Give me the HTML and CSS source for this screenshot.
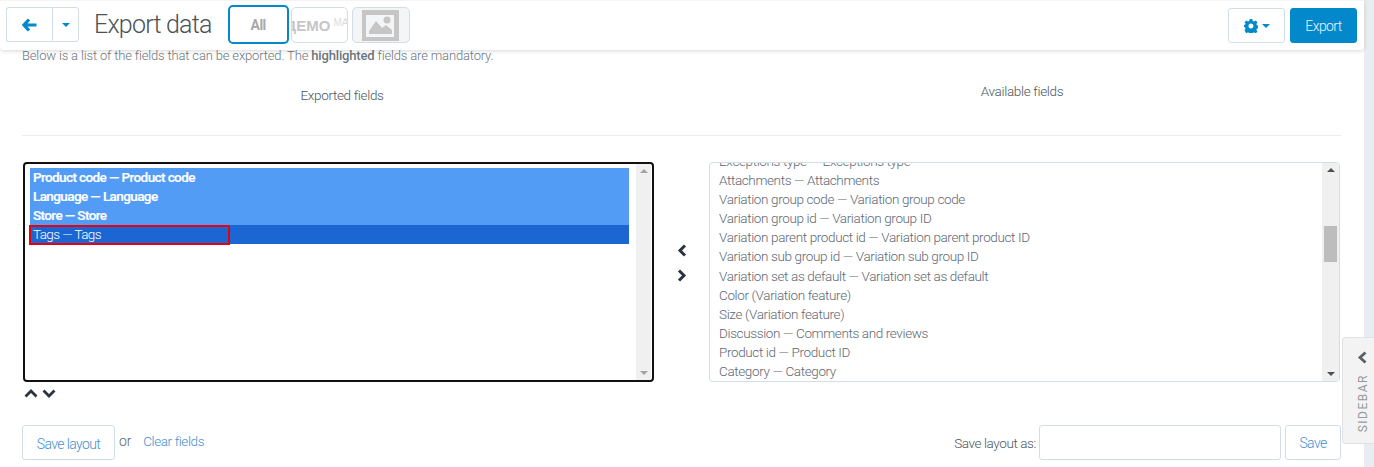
FILE: index.html
```html
<!DOCTYPE html>
<html lang="en">
<head>
<meta charset="utf-8">
<title>Export data</title>
<link rel="stylesheet" href="styles.css">
</head>
<body>
<div class="page">
  <main class="main">
    <header class="toolbar">
      <div class="btn-group">
        <button class="btn btn-back"><svg width="16" height="14" viewBox="0 0 16 14"><path d="M7 1.500 2 7l5 5.500M2.500 7H14.500" fill="none" stroke="#0388cc" stroke-width="3.200"/></svg></button>
        <button class="btn btn-caret"><span class="caret"></span></button>
      </div>
      <h1 class="title">Export data</h1>
      <div class="tabs">
        <div class="tab tab-all">All</div>
        <div class="tab tab-demo"><span class="demo-text">ДЕМО</span><span class="demo-sub">MA</span></div>
        <div class="tab tab-img">
          <svg width="37" height="31" viewBox="0 0 37 31"><path fill="#c6c6c6" d="M0 0h37v31H0z"/><path fill="#f4f5f6" d="M4 5h28v22H4z"/><path fill="#c6c6c6" d="M7 24v-3l7-10 6 7 4-3 6 5v4z"/><circle cx="25" cy="10" r="3.500" fill="#c6c6c6"/></svg>
        </div>
      </div>
      <div class="toolbar-right">
        <button class="btn btn-gear">
          <svg width="14" height="14" viewBox="0 0 14 14"><path fill="#0388cc" fill-rule="evenodd" d="M5.700 0h2.600l.4 1.900 1.300.6L11.700 1.400l1.800 1.800-1.100 1.700.6 1.300 1.900.4v2.600l-1.900.4-.6 1.300 1.100 1.700-1.800 1.800-1.700-1.100-1.300.6-.4 1.900H5.700l-.4-1.900-1.300-.6-1.700 1.100L.5 11.300l1.100-1.700-.6-1.300L0 7.900V6.100l1-.3.600-1.300L.5 3.200l1.800-1.800 1.700 1.100 1.300-.6zM7 4.500a2.500 2.500 0 1 0 0 5 2.500 2.500 0 0 0 0-5z"/></svg>
          <span class="caret caret-small"></span>
        </button>
        <button class="btn btn-primary">Export</button>
      </div>
    </header>

    <div class="content">
      <p class="intro">Below is a list of the fields that can be exported. The <b>highlighted</b> fields are mandatory.</p>

      <div class="labels">
        <div class="label label-left">Exported fields</div>
        <div class="label label-right">Available fields</div>
      </div>
      <hr class="rule">

      <div class="pickers">
        <div class="picker-col">
          <div class="listbox listbox-focus">
            <ul class="options options-left">
              <li class="opt sel-mandatory">Product code — Product code</li>
              <li class="opt sel-mandatory">Language — Language</li>
              <li class="opt sel-mandatory">Store — Store</li>
              <li class="opt sel-active">Tags — Tags<span class="marker"></span></li>
            </ul>
            <div class="scrollbar scrollbar-idle">
              <span class="arrow-up"></span>
              <span class="arrow-down"></span>
            </div>
          </div>
          <div class="order-btns">
            <svg width="14" height="9" viewBox="0 0 14 9"><path d="M1.500 7.500 7 2l5.500 5.500" fill="none" stroke="#2b3440" stroke-width="2.800"/></svg>
            <svg width="14" height="9" viewBox="0 0 14 9"><path d="M1.500 1.500 7 7l5.500-5.500" fill="none" stroke="#2b3440" stroke-width="2.800"/></svg>
          </div>
        </div>

        <div class="move-btns">
          <svg width="10" height="13" viewBox="0 0 10 13"><path d="M8 1.500 3 6.500l5 5" fill="none" stroke="#2b3440" stroke-width="3"/></svg>
          <svg width="10" height="13" viewBox="0 0 10 13"><path d="M2 1.500 7 6.500l-5 5" fill="none" stroke="#2b3440" stroke-width="3"/></svg>
        </div>

        <div class="listbox listbox-plain">
          <ul class="options options-right">
            <li class="opt">Exceptions type — Exceptions type</li>
            <li class="opt">Attachments — Attachments</li>
            <li class="opt">Variation group code — Variation group code</li>
            <li class="opt">Variation group id — Variation group ID</li>
            <li class="opt">Variation parent product id — Variation parent product ID</li>
            <li class="opt">Variation sub group id — Variation sub group ID</li>
            <li class="opt">Variation set as default — Variation set as default</li>
            <li class="opt">Color (Variation feature)</li>
            <li class="opt">Size (Variation feature)</li>
            <li class="opt">Discussion — Comments and reviews</li>
            <li class="opt">Product id — Product ID</li>
            <li class="opt">Category — Category</li>
          </ul>
          <div class="scrollbar scrollbar-active">
            <span class="arrow-up"></span>
            <span class="thumb"></span>
            <span class="arrow-down"></span>
          </div>
        </div>
      </div>

      <div class="footer-row">
        <div class="footer-left">
          <button class="btn btn-outline btn-save-layout">Save layout</button>
          <span class="or">or</span>
          <a class="link" href="#">Clear fields</a>
        </div>
        <div class="footer-right">
          <label class="save-as">Save layout as:</label>
          <div class="input"></div>
          <button class="btn btn-outline btn-save">Save</button>
        </div>
      </div>
    </div>
  </main>
  <aside class="gutter"></aside>
  <div class="sidebar-tab">
    <svg width="11" height="13" viewBox="0 0 11 13"><path d="M8.500 1.500 3 6.500l5.500 5" fill="none" stroke="#5a5f66" stroke-width="2.800"/></svg>
    <span class="sidebar-text">SIDEBAR</span>
  </div>
</div>
</body>
</html>
```
FILE: styles.css
```css
* { box-sizing: border-box; }
html, body { margin: 0; padding: 0; height: 467px; overflow: hidden; background: #fff; }
body { font-family: Roboto, "Liberation Sans", sans-serif; font-weight: 300; font-size: 14px; color: #55606b; }
.page { display: flex; width: 1374px; height: 467px; position: relative; overflow: hidden; }
.main { width: 1364px; flex: none; position: relative; }
.gutter { flex: 1; background: #e9edf1; }

.toolbar { position: relative; z-index: 2; height: 50px; padding: 6px 7px 0 6px; display: flex; align-items: flex-start; background: #fff; border-top: 1px solid #f4f4f4; border-radius: 0 0 4px 4px; box-shadow: 0 1px 4px rgba(0,0,0,.16); }
.btn { font-family: inherit; font-weight: 300; font-size: 14px; letter-spacing: -.6px; height: 35px; background: #fff; border: 1px solid #d3dde6; border-radius: 3px; padding: 0; display: inline-flex; align-items: center; justify-content: center; color: #3f8fd2; }
.btn-group { display: flex; }
.btn-back { width: 46px; border-radius: 3px 0 0 3px; border-right: 0; }
.btn-caret { width: 27px; border-radius: 0 3px 3px 0; }
.caret { width: 0; height: 0; border-left: 4px solid transparent; border-right: 4px solid transparent; border-top: 4px solid #0388cc; }
.title { margin: 1px 0 0 15px; font-size: 25px; line-height: 34px; font-weight: 300; color: #4a5259; letter-spacing: -.78px; }
.tabs { display: flex; align-items: flex-start; margin-left: 16px; gap: 2px; }
.tab { height: 36px; border-radius: 5px; display: flex; align-items: center; justify-content: center; overflow: hidden; border: 1px solid #d3dde6; }
.tab-all { width: 61px; height: 39px; margin-top: -2px; border: 2px solid #0388cc; font-weight: 700; font-size: 14px; letter-spacing: -.6px; color: #a8a8a8; }
.tab-demo { width: 57px; justify-content: flex-start; font-family: "Liberation Sans", sans-serif; white-space: nowrap; }
.demo-text { font-size: 15px; font-weight: 700; color: #c6c6c6; margin-left: -6px; }
.demo-sub { font-size: 10px; font-weight: 400; color: #dcdcdc; margin: -5px 0 0 3px; }
.tab-img { width: 58px; margin-left: 2px; background: #f4f5f6; }
.toolbar-right { margin-left: auto; display: flex; gap: 5px; padding-top: 1px; }
.btn-gear { width: 57px; gap: 4px; }
.caret-small { border-top-color: #0388cc; }
.btn-primary { width: 67px; background: #0388cc; border-color: #0388cc; color: #e9f6fd; }

.content { padding: 0 23px 0 22px; position: relative; }
.intro { margin: -1px 0 0; height: 21px; line-height: 13px; font-size: 13px; color: #6d7680; letter-spacing: -.16px; }
.intro b { font-weight: 500; }
.labels { display: flex; height: 65px; }
.label { width: 50%; flex: none; font-size: 13.500px; letter-spacing: -.33px; color: #4c555d; text-align: center; }
.label-left { padding: 17px 0 0 0; margin-left: -9.750px; }
.label-right { padding: 13px 0 0 0; margin-left: 20.500px; }
.rule { border: 0; border-top: 1px solid #e8ecef; margin: 0 0 26px 0; height: 0; }

.pickers { display: flex; align-items: flex-start; }
.picker-col { width: 631px; margin-left: 1px; flex: none; }
.listbox { height: 220px; display: flex; overflow: hidden; background: #fff; }
.listbox-focus { border: 2px solid #111; border-radius: 4px; }
.listbox-plain { width: 631px; border: 1px solid #d3dde6; border-radius: 4px; flex: none; }
.options { list-style: none; margin: 0; padding: 0; flex: 1; min-width: 0; overflow: hidden; font-size: 13.500px; }
.options-left { padding: 4px 7px 0 5px; letter-spacing: -.6px; }
.options-right { margin-top: -11px; padding-left: 9px; color: #5e6873; letter-spacing: -.37px; }
.opt { height: 19px; line-height: 19px; white-space: nowrap; }
.options-right .opt { height: 19.100px; }
.options-left .opt { padding-left: 3px; color: #fff; position: relative; }
.options-left .sel-mandatory { background: #529cf5; font-weight: 500; -webkit-text-stroke: .2px #fff; }
.sel-active { background: #1b66d2; }
.marker { position: absolute; left: -1px; top: 0; width: 201px; height: 20px; border: 2px solid #e8000d; }

.scrollbar { width: 15px; flex: none; background: #f0f0f0; position: relative; height: 100%; }
.scrollbar-active { width: 17px; }
.arrow-up, .arrow-down { position: absolute; left: 50%; margin-left: -4px; width: 0; height: 0; border-left: 4px solid transparent; border-right: 4px solid transparent; }
.arrow-up { top: 5px; border-bottom: 4px solid #a3a3a3; }
.arrow-down { bottom: 5px; border-top: 4px solid #a3a3a3; }
.scrollbar-active .arrow-up { border-bottom-color: #505050; }
.scrollbar-active .arrow-down { border-top-color: #505050; }
.scrollbar-idle { margin-right: 1px; }
.thumb { position: absolute; left: 2px; top: 63px; width: 13px; height: 36px; background: #bdbdbd; }

.order-btns { display: flex; gap: 4px; height: 13px; padding: 7px 0 0 1px; box-sizing: content-box; }
.move-btns { width: 55px; flex: none; display: flex; flex-direction: column; align-items: flex-start; gap: 12px; padding: 82px 0 0 23px; }

.footer-row { display: flex; justify-content: space-between; align-items: flex-start; margin-top: 23px; }
.footer-left { display: flex; align-items: center; }
.btn-outline { color: #3f8fd2; }
.btn-save-layout { width: 93px; height: 35px; padding-top: 2px; }
.or { margin-left: 4px; font-size: 14px; letter-spacing: -.2px; color: #5c6670; margin-top: -3px; }
.link { margin-left: 12px; font-size: 13.500px; letter-spacing: -.4px; color: #3f8fd2; text-decoration: none; margin-top: -3px; }
.footer-right { display: flex; align-items: center; }
.save-as { font-size: 13.500px; letter-spacing: -.4px; color: #4c555d; margin-right: 3px; }
.input { width: 242px; height: 35px; border: 1px solid #d3dde6; border-radius: 3px; }
.btn-save { width: 56px; margin-left: 4px; }

.sidebar-tab { position: absolute; z-index: 3; left: 1342px; top: 337px; width: 32px; height: 107px; background: #f3f3f3; border: 1px solid #dfe3e6; border-right: 0; border-radius: 4px 0 0 4px; display: flex; flex-direction: column; align-items: center; padding: 13px 0 0 8px; gap: 10px; }
.sidebar-text { writing-mode: vertical-rl; transform: rotate(180deg); font-size: 12px; font-weight: 400; letter-spacing: 1.500px; color: #95999d; }
```
